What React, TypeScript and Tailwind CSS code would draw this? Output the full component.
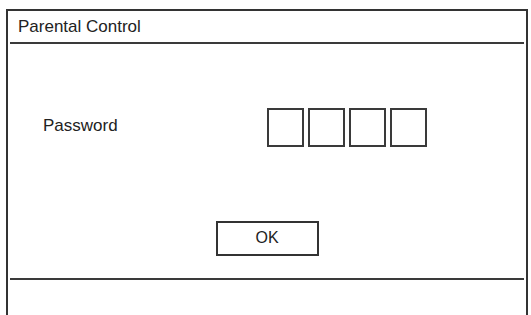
import React from "react";

export default function App() {
  return (
    <div
      className="w-[531px] h-[315px] bg-white pt-[9px] pl-[6px] pr-[3px] overflow-hidden"
      style={{ fontFamily: '"Liberation Sans", Arial, sans-serif' }}
    >
      <div className="h-[306px] border-t-2 border-l-2 border-r-2 border-[#333] flex flex-col">
        <div className="h-[31px] pl-[10px] text-[17px] leading-[31px] text-[#222]">
          Parental Control
        </div>
        <div className="h-[2px] mx-[2px] bg-[#3a3a3a]" />
        <div className="h-[234px] flex flex-col">
          <div className="mt-[64px] flex items-start pl-[35px]">
            <div className="w-[224px] mt-[8px] text-[17px] leading-[20px] text-[#222]">
              Password
            </div>
            <div className="flex gap-[4px]">
              <div className="w-[37px] h-[39px] border-2 border-[#3a3a3a]" />
              <div className="w-[37px] h-[39px] border-2 border-[#3a3a3a]" />
              <div className="w-[37px] h-[39px] border-2 border-[#3a3a3a]" />
              <div className="w-[37px] h-[39px] border-2 border-[#3a3a3a]" />
            </div>
          </div>
          <div className="mt-[74px] flex justify-center">
            <div className="w-[103px] h-[35px] border-2 border-[#333] flex items-center justify-center pb-[2px] text-[16px] leading-[20px] text-[#222]">
              OK
            </div>
          </div>
        </div>
        <div className="h-[2px] mx-[2px] bg-[#3a3a3a]" />
      </div>
    </div>
  );
}
